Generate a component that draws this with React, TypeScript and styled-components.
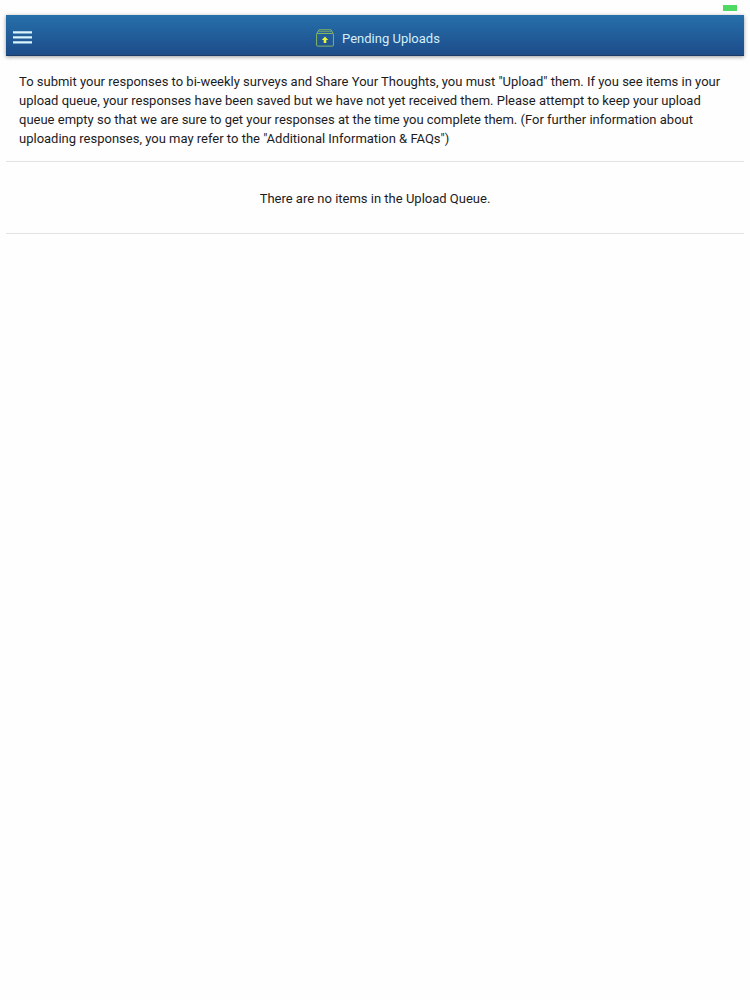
import React from "react";
import styled, { createGlobalStyle } from "styled-components";

const GlobalStyle = createGlobalStyle`
  * { box-sizing: border-box; }
  body {
    margin: 0;
    background: #fefefe;
    color: #1c1c1e;
    font-family: Roboto, "Liberation Sans", sans-serif;
    font-size: 13px;
    line-height: 19px;
  }
`;

const Page = styled.div`
  padding: 0 6px;
`;

const StatusBar = styled.div`
  display: flex;
  justify-content: flex-end;
  height: 15px;
  padding: 5px 7px 4px 0;
`;

const Battery = styled.span`
  width: 14px;
  height: 6px;
  background: #4fd964;
`;

const Header = styled.header`
  display: grid;
  grid-template-columns: 32px 1fr 26px;
  align-items: center;
  height: 41px;
  background: linear-gradient(#2670aa, #1d4c8a);
  border-bottom: 1px solid #1b3a66;
  box-shadow: 0 1px 4px rgba(0, 0, 0, 0.4);
`;

const MenuButton = styled.button`
  display: flex;
  width: 32px;
  height: 40px;
  align-items: center;
  padding: 4px 0 0 7px;
  border: 0;
  background: none;
  color: #d9f4fb;
  cursor: pointer;
`;

const Title = styled.h1`
  display: flex;
  align-items: center;
  justify-content: center;
  gap: 8px;
  margin: 0;
  padding-top: 6px;
  color: #d5eefa;
  font-size: 13px;
  font-weight: 400;
`;

const Section = styled.section<{ $centered?: boolean }>`
  padding: ${(p) => (p.$centered ? "27px 13px 25px" : "16px 13px 13px")};
  border-bottom: 1px solid #e3e3e6;
  text-align: ${(p) => (p.$centered ? "center" : "left")};
`;

const Text = styled.p`
  margin: 0;
`;

function MenuIcon() {
  return (
    <svg width="19" height="13" viewBox="0 0 19 13" fill="currentColor" aria-hidden="true">
      <path d="M0 .2h19v2.3H0zM0 5.2h19v2.3H0zM0 10.2h19v2.3H0z" />
    </svg>
  );
}

function UploadBoxIcon() {
  return (
    <svg width="18" height="18" viewBox="0 0 18 18" fill="none" aria-hidden="true">
      <path d="M3 .8h12l2 3.4M3 .8L1 4.2" stroke="#86b562" />
      <path d="M2.6 2.6h12.8" stroke="#86b562" strokeWidth=".7" />
      <rect x=".6" y="4.5" width="16.8" height="12.6" rx=".6" stroke="#86b562" />
      <path d="M9 7.6l3.2 3.3h-1.9v3.2H7.7v-3.2H5.8z" fill="#eaf43a" />
    </svg>
  );
}

export default function App() {
  return (
    <Page>
      <GlobalStyle />
      <StatusBar>
        <Battery />
      </StatusBar>
      <Header>
        <MenuButton type="button" aria-label="Menu">
          <MenuIcon />
        </MenuButton>
        <Title>
          <UploadBoxIcon />
          Pending Uploads
        </Title>
      </Header>
      <main>
        <Section>
          <Text>
            To submit your responses to bi-weekly surveys and Share Your Thoughts, you must "Upload"
            them. If you see items in your upload queue, your responses have been saved but we have
            not yet received them. Please attempt to keep your upload queue empty so that we are
            sure to get your responses at the time you complete them. (For further information about
            uploading responses, you may refer to the "Additional Information &amp; FAQs")
          </Text>
        </Section>
        <Section $centered>
          <Text>There are no items in the Upload Queue.</Text>
        </Section>
      </main>
    </Page>
  );
}
